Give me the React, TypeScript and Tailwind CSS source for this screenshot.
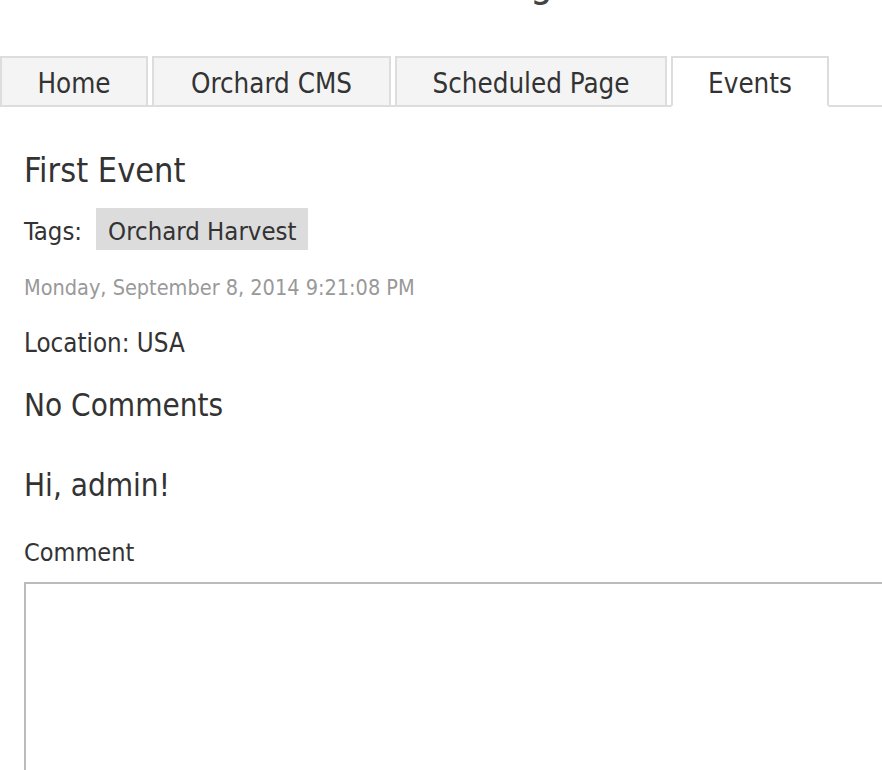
import React from "react";

const font = { fontFamily: '"DejaVu Sans Condensed", "DejaVu Sans", sans-serif' };

export default function App() {
  const tabs = [
    { label: "Home", w: "w-[148px]", active: false },
    { label: "Orchard CMS", w: "w-[239px]", active: false },
    { label: "Scheduled Page", w: "w-[272px]", active: false },
    { label: "Events", w: "w-[158px]", active: true },
  ];
  return (
    <div className="bg-white h-[770px] overflow-hidden text-[#333]" style={font}>
      <div className="h-[56px] overflow-hidden">
        <p className="pl-[530px] -mt-[42px] text-[40px] leading-[48px] text-[#444]">g</p>
      </div>
      <ul className="flex gap-[4px] border-b-2 border-[#dddddd]">
        {tabs.map((t) => (
          <li
            key={t.label}
            className={`${t.w} -mb-[2px] h-[51px] pt-[4px] border-2 border-[#dddddd] flex items-center justify-center text-[27.5px] text-[#333] ${
              t.active ? "bg-white border-b-white" : "bg-[#f4f4f4]"
            }`}
          >
            {t.label}
          </li>
        ))}
      </ul>
      <div className="pl-[24px]">
        <h1 className="mt-[43px] text-[34px] leading-[40px] text-[#333]">First Event</h1>
        <div className="mt-[18px] flex items-center gap-[14px] text-[25.5px] leading-[34px]">
          <span className="pt-[3px]">Tags:</span>
          <span className="bg-[#dcdcdc] h-[42px] px-[12px] pt-[3px] flex items-center">Orchard Harvest</span>
        </div>
        <p className="mt-[23px] text-[21.5px] leading-[30px] text-[#999]">Monday, September 8, 2014 9:21:08 PM</p>
        <p className="mt-[23px] text-[25.7px] leading-[34px]">Location: USA</p>
        <h2 className="mt-[25px] text-[31.2px] leading-[40px]">No Comments</h2>
        <h2 className="mt-[40px] text-[31.2px] leading-[40px]">Hi, admin!</h2>
        <label className="block mt-[31px] text-[25px] leading-[34px]">Comment</label>
        <textarea className="block mt-[12px] w-[900px] h-[220px] border-2 border-[#bbbbbb]" />
      </div>
    </div>
  );
}
